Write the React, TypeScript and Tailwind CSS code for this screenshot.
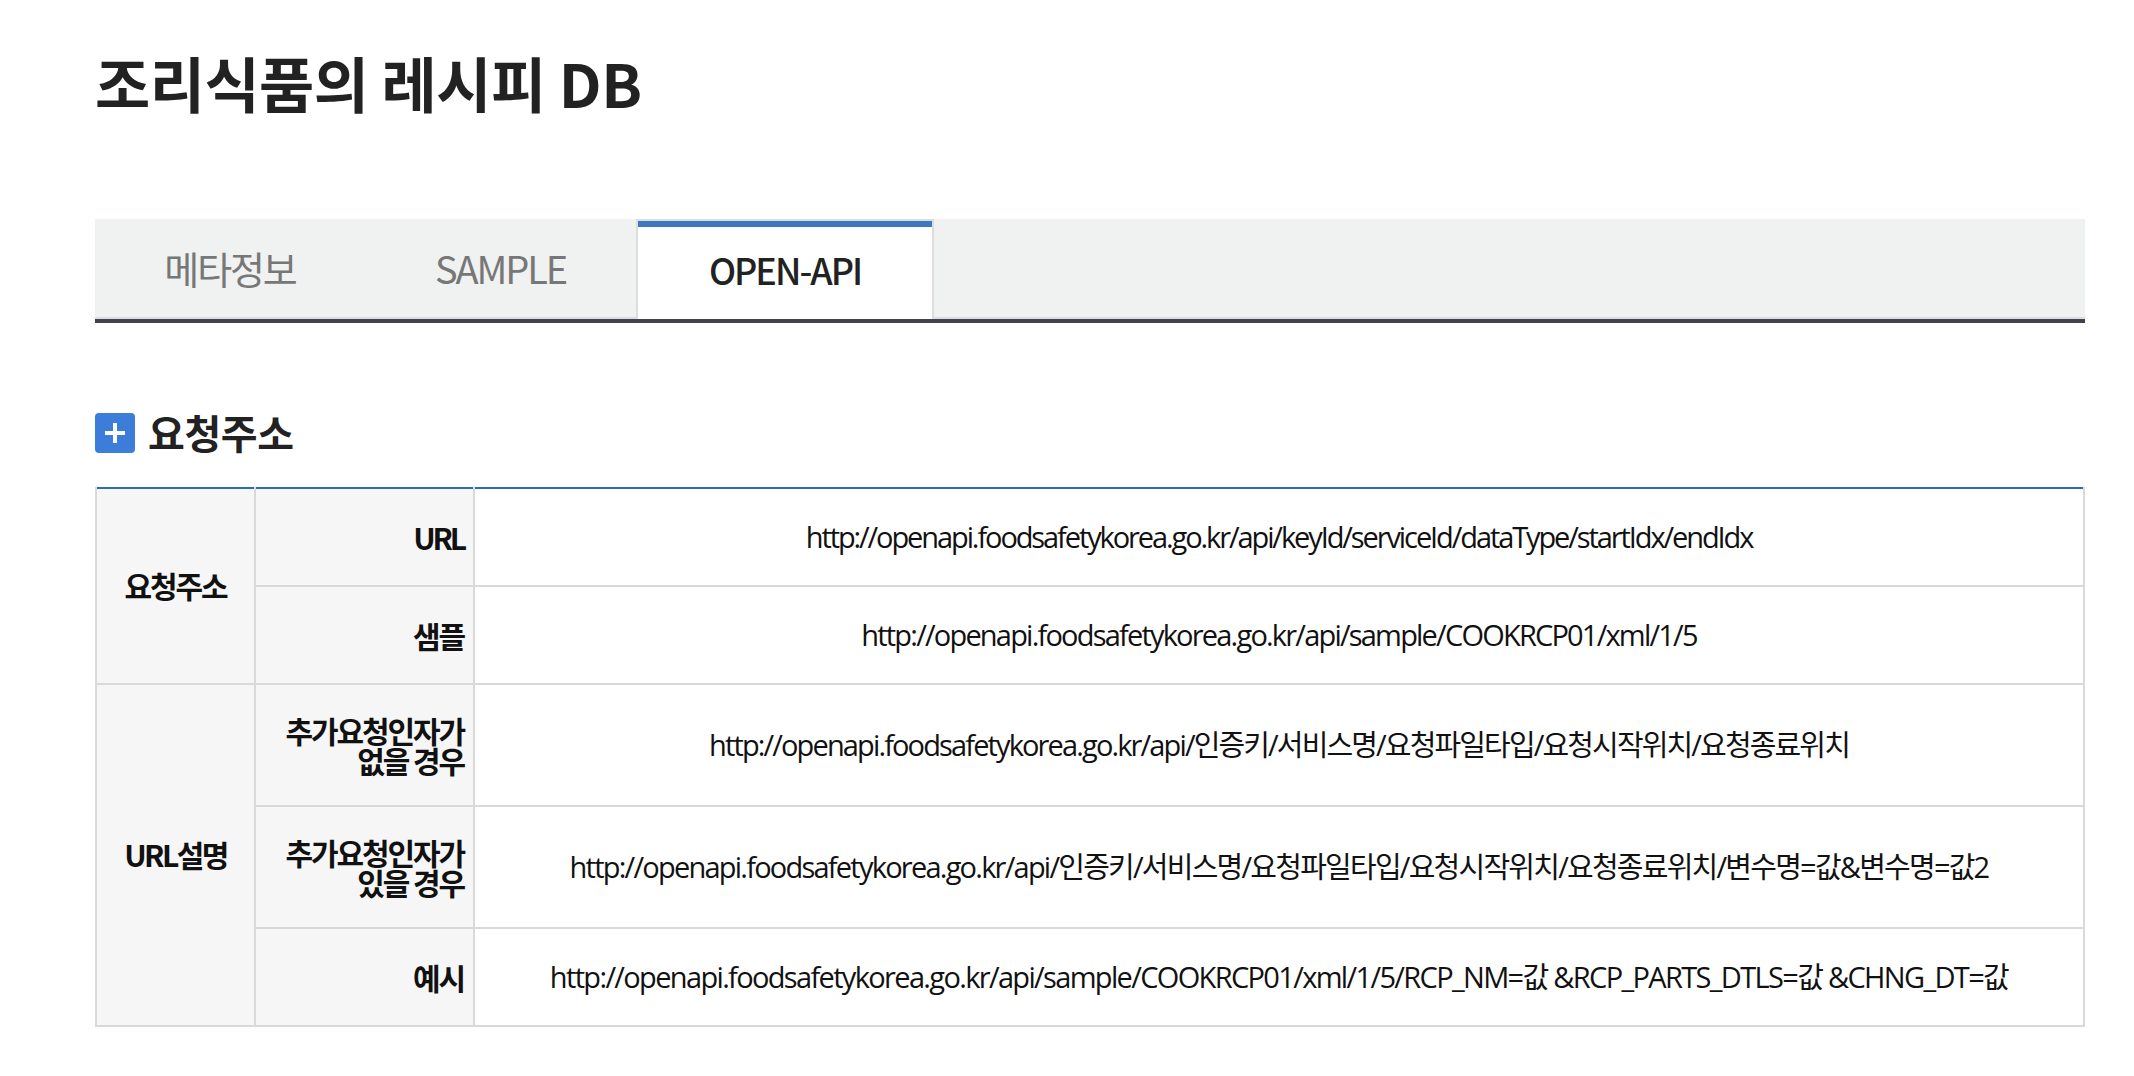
import React from "react";

const font = "[font-family:'Noto_Sans_CJK_KR','Noto_Sans',sans-serif]";

function Th({ children, rowSpan, right, className = "" }: { children: React.ReactNode; rowSpan?: number; right?: boolean; className?: string }) {
  return (
    <th
      rowSpan={rowSpan}
      className={`border-2 border-[#d9d9d9] bg-[#f6f6f6] border-t-0 align-middle text-[30px] leading-[30px] font-bold text-[#111] ${right ? "text-right pr-[9px]" : "text-center"} ${className || "tracking-[-2.1px]"}`}
    >
      {children}
    </th>
  );
}

function Td({ children, className }: { children: React.ReactNode; className: string }) {
  return (
    <td className={`border-2 border-[#d9d9d9] border-t-0 text-center align-middle [font-family:'Open_Sans','Noto_Sans_CJK_KR',sans-serif] text-[29px] font-normal text-[#111] ${className}`}>
      {children}
    </td>
  );
}

export default function App() {
  return (
    <div className={`min-h-[1076px] bg-white pl-[95px] pr-[49px] ${font}`}>
      <h1 className="pt-[42px] h-[219px] text-[60px] leading-[80px] font-bold tracking-[-0.5px] text-[#222]">
        조리식품의 레시피 DB
      </h1>

      <div className="flex h-[104px] border-b-[4px] border-[#41414f] bg-[#f0f1f1] shadow-[inset_0_-2px_0_#dddddd]">
        <div className="flex w-[270px] items-center justify-center pb-1 text-[38px] tracking-[-2.1px] text-[#777]">메타정보</div>
        <div className="flex w-[271px] items-center justify-center pb-1 text-[38px] tracking-[-2.1px] text-[#777]">SAMPLE</div>
        <div className="flex h-[100px] w-[298px] items-center justify-center border-x-2 border-t-2 border-[#dddddd] bg-white">
          <div className="flex h-full w-full items-center justify-center border-t-[6px] border-[#3f79bd] pb-[8px] text-[36px] font-medium tracking-[-2px] text-[#222]">OPEN-API</div>
        </div>
      </div>

      <div className="mt-[90px] flex h-[40px] items-center gap-[13px]">
        <span className="flex h-[40px] w-[40px] items-center justify-center rounded-[4px] bg-[#3c7dd9]">
          <svg width="20" height="20" viewBox="0 0 20 20"><path d="M10 0v20M0 10h20" stroke="#fff" strokeWidth="4" /></svg>
        </span>
        <h2 className="pb-[2px] text-[40px] leading-[40px] font-bold tracking-[-0.4px] text-[#222]">요청주소</h2>
      </div>

      <table className="mt-[34px] h-[538px] w-full table-fixed border-collapse border-t-2 border-[#2b6cb5]">
        <colgroup>
          <col className="w-[159px]" />
          <col className="w-[219px]" />
          <col />
        </colgroup>
        <tbody>
          <tr className="h-[98px]">
            <Th rowSpan={2} className="tracking-[-2.1px] pb-[3px]">요청주소</Th>
            <Th right className="tracking-[-3.2px]">URL</Th>
            <Td className="tracking-[-2.1px]">http://openapi.foodsafetykorea.go.kr/api/keyId/serviceId/dataType/startIdx/endIdx</Td>
          </tr>
          <tr className="h-[98px]">
            <Th right>샘플</Th>
            <Td className="tracking-[-1.8px]">http://openapi.foodsafetykorea.go.kr/api/sample/COOKRCP01/xml/1/5</Td>
          </tr>
          <tr className="h-[122px]">
            <Th rowSpan={3} className="tracking-[-2.6px] pb-[2px]">URL설명</Th>
            <Th right>추가요청인자가<br />없을 경우</Th>
            <Td className="tracking-[-1.87px]">http://openapi.foodsafetykorea.go.kr/api/인증키/서비스명/요청파일타입/요청시작위치/요청종료위치</Td>
          </tr>
          <tr className="h-[122px]">
            <Th right>추가요청인자가<br />있을 경우</Th>
            <Td className="tracking-[-1.77px]">http://openapi.foodsafetykorea.go.kr/api/인증키/서비스명/요청파일타입/요청시작위치/요청종료위치/변수명=값&amp;변수명=값2</Td>
          </tr>
          <tr className="h-[98px]">
            <Th right>예시</Th>
            <Td className="tracking-[-1.66px]">http://openapi.foodsafetykorea.go.kr/api/sample/COOKRCP01/xml/1/5/RCP_NM=값 &amp;RCP_PARTS_DTLS=값 &amp;CHNG_DT=값</Td>
          </tr>
        </tbody>
      </table>
    </div>
  );
}
